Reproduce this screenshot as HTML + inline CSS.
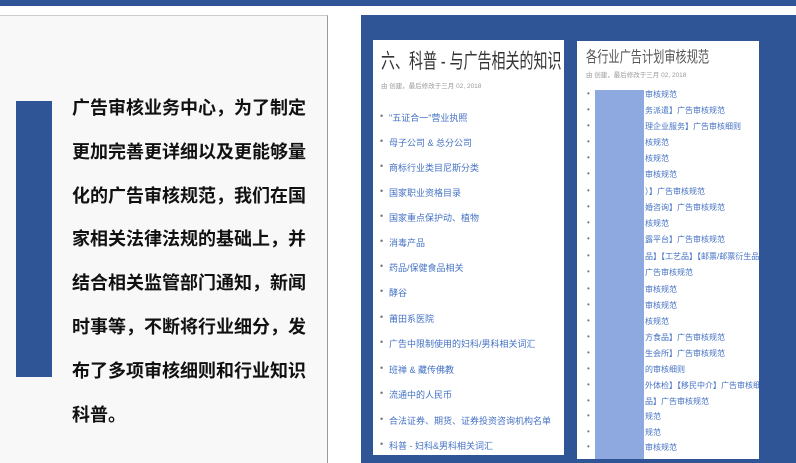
<!DOCTYPE html>
<html><head><meta charset="utf-8"><style>
*{margin:0;padding:0;box-sizing:border-box}
body{width:796px;height:463px;background:#fff;position:relative;overflow:hidden;font-family:"Liberation Sans","Noto Sans CJK SC",sans-serif}
.top{position:absolute;left:0;top:0;width:796px;height:6px;background:#2f5597}
.lp{position:absolute;left:0;top:15px;width:328px;height:448px;background:#f8f8f8;border-right:1px solid #999;border-top:1px solid #ccc}
.bar{position:absolute;left:16px;top:101px;width:36px;height:276px;background:#2f5597}
.txt{position:absolute;left:72px;top:87px;font-weight:bold;font-size:18px;line-height:43.8px;color:#111;white-space:nowrap}
.rp{position:absolute;left:361px;top:15px;width:435px;height:448px;background:#2f5597}
.c1{position:absolute;left:373px;top:40px;width:191px;height:415px;background:#fff}
.c2{position:absolute;left:577px;top:41px;width:182px;height:418px;background:#fff;overflow:hidden}
.h1{position:absolute;left:8px;top:6px;font-size:14px;color:#333;white-space:nowrap;transform:scaleY(1.45);transform-origin:0 0}
.sub{position:absolute;font-size:6.5px;color:#999;white-space:nowrap}
.li{position:absolute;font-size:9px;color:#4472c4;white-space:nowrap}
.li:before{content:"•";color:#777;position:absolute;left:-9px}
.h2{position:absolute;left:9px;top:5px;font-size:11.2px;color:#555;white-space:nowrap;transform:scaleY(1.35);transform-origin:0 0}
.blk{position:absolute;left:18px;top:49px;width:49px;height:380px;background:#8ea9e0}
.r{position:absolute;left:68px;font-size:8px;color:#4472c4;white-space:nowrap}
.d{position:absolute;left:10px;font-size:8px;color:#777}
</style></head><body>
<div class="top"></div>
<div class="lp"></div>
<div class="bar"></div>
<div class="txt">广告审核业务中心，为了制定<br>更加完善更详细以及更能够量<br>化的广告审核规范，我们在国<br>家相关法律法规的基础上，并<br>结合相关监管部门通知，新闻<br>时事等，不断将行业细分，发<br>布了多项审核细则和行业知识<br>科普。</div>
<div class="rp"></div>
<div class="c1">
<div class="h1">六、科普 - 与广告相关的知识</div>
<div class="sub" style="left:8px;top:40px">由 创建，最后修改于三月 02, 2018</div>
<div class="li" style="left:16px;top:71px">"五证合一"营业执照</div>
<div class="li" style="left:16px;top:96px">母子公司 &amp; 总分公司</div>
<div class="li" style="left:16px;top:121px">商标行业类目尼斯分类</div>
<div class="li" style="left:16px;top:146px">国家职业资格目录</div>
<div class="li" style="left:16px;top:171px">国家重点保护动、植物</div>
<div class="li" style="left:16px;top:196px">消毒产品</div>
<div class="li" style="left:16px;top:221px">药品/保健食品相关</div>
<div class="li" style="left:16px;top:246px">酵谷</div>
<div class="li" style="left:16px;top:272px">莆田系医院</div>
<div class="li" style="left:16px;top:297px">广告中限制使用的妇科/男科相关词汇</div>
<div class="li" style="left:16px;top:323px">班禅 &amp; 藏传佛教</div>
<div class="li" style="left:16px;top:348px">流通中的人民币</div>
<div class="li" style="left:16px;top:374px">合法证券、期货、证券投资咨询机构名单</div>
<div class="li" style="left:16px;top:399px">科普 - 妇科&amp;男科相关词汇</div>
</div>
<div class="c2">
<div class="h2">各行业广告计划审核规范</div>
<div class="sub" style="left:9px;top:28px">由 创建，最后修改于三月 02, 2018</div>
<div class="blk"></div>
<div class="d" style="top:48px">•</div><div class="r" style="top:48px">审核规范</div>
<div class="d" style="top:64px">•</div><div class="r" style="top:64px">务派遣】广告审核规范</div>
<div class="d" style="top:80px">•</div><div class="r" style="top:80px">理企业服务】广告审核细则</div>
<div class="d" style="top:96px">•</div><div class="r" style="top:96px">核规范</div>
<div class="d" style="top:112px">•</div><div class="r" style="top:112px">核规范</div>
<div class="d" style="top:128px">•</div><div class="r" style="top:128px">审核规范</div>
<div class="d" style="top:145px">•</div><div class="r" style="top:145px">）】广告审核规范</div>
<div class="d" style="top:161px">•</div><div class="r" style="top:161px">婚咨询】广告审核规范</div>
<div class="d" style="top:177px">•</div><div class="r" style="top:177px">核规范</div>
<div class="d" style="top:193px">•</div><div class="r" style="top:193px">露平台】广告审核规范</div>
<div class="d" style="top:210px">•</div><div class="r" style="top:210px">品】【工艺品】【邮票/邮票衍生品】【</div>
<div class="d" style="top:226px">•</div><div class="r" style="top:226px">广告审核规范</div>
<div class="d" style="top:243px">•</div><div class="r" style="top:243px">审核规范</div>
<div class="d" style="top:259px">•</div><div class="r" style="top:259px">审核规范</div>
<div class="d" style="top:275px">•</div><div class="r" style="top:275px">核规范</div>
<div class="d" style="top:291px">•</div><div class="r" style="top:291px">方食品】广告审核规范</div>
<div class="d" style="top:307px">•</div><div class="r" style="top:307px">生会所】广告审核规范</div>
<div class="d" style="top:323px">•</div><div class="r" style="top:323px">的审核细则</div>
<div class="d" style="top:339px">•</div><div class="r" style="top:339px">外体检】【移民中介】广告审核细则</div>
<div class="d" style="top:355px">•</div><div class="r" style="top:355px">品】广告审核规范</div>
<div class="d" style="top:370px">•</div><div class="r" style="top:370px">规范</div>
<div class="d" style="top:386px">•</div><div class="r" style="top:386px">规范</div>
<div class="d" style="top:401px">•</div><div class="r" style="top:401px">审核规范</div>
</div>
</body></html>
